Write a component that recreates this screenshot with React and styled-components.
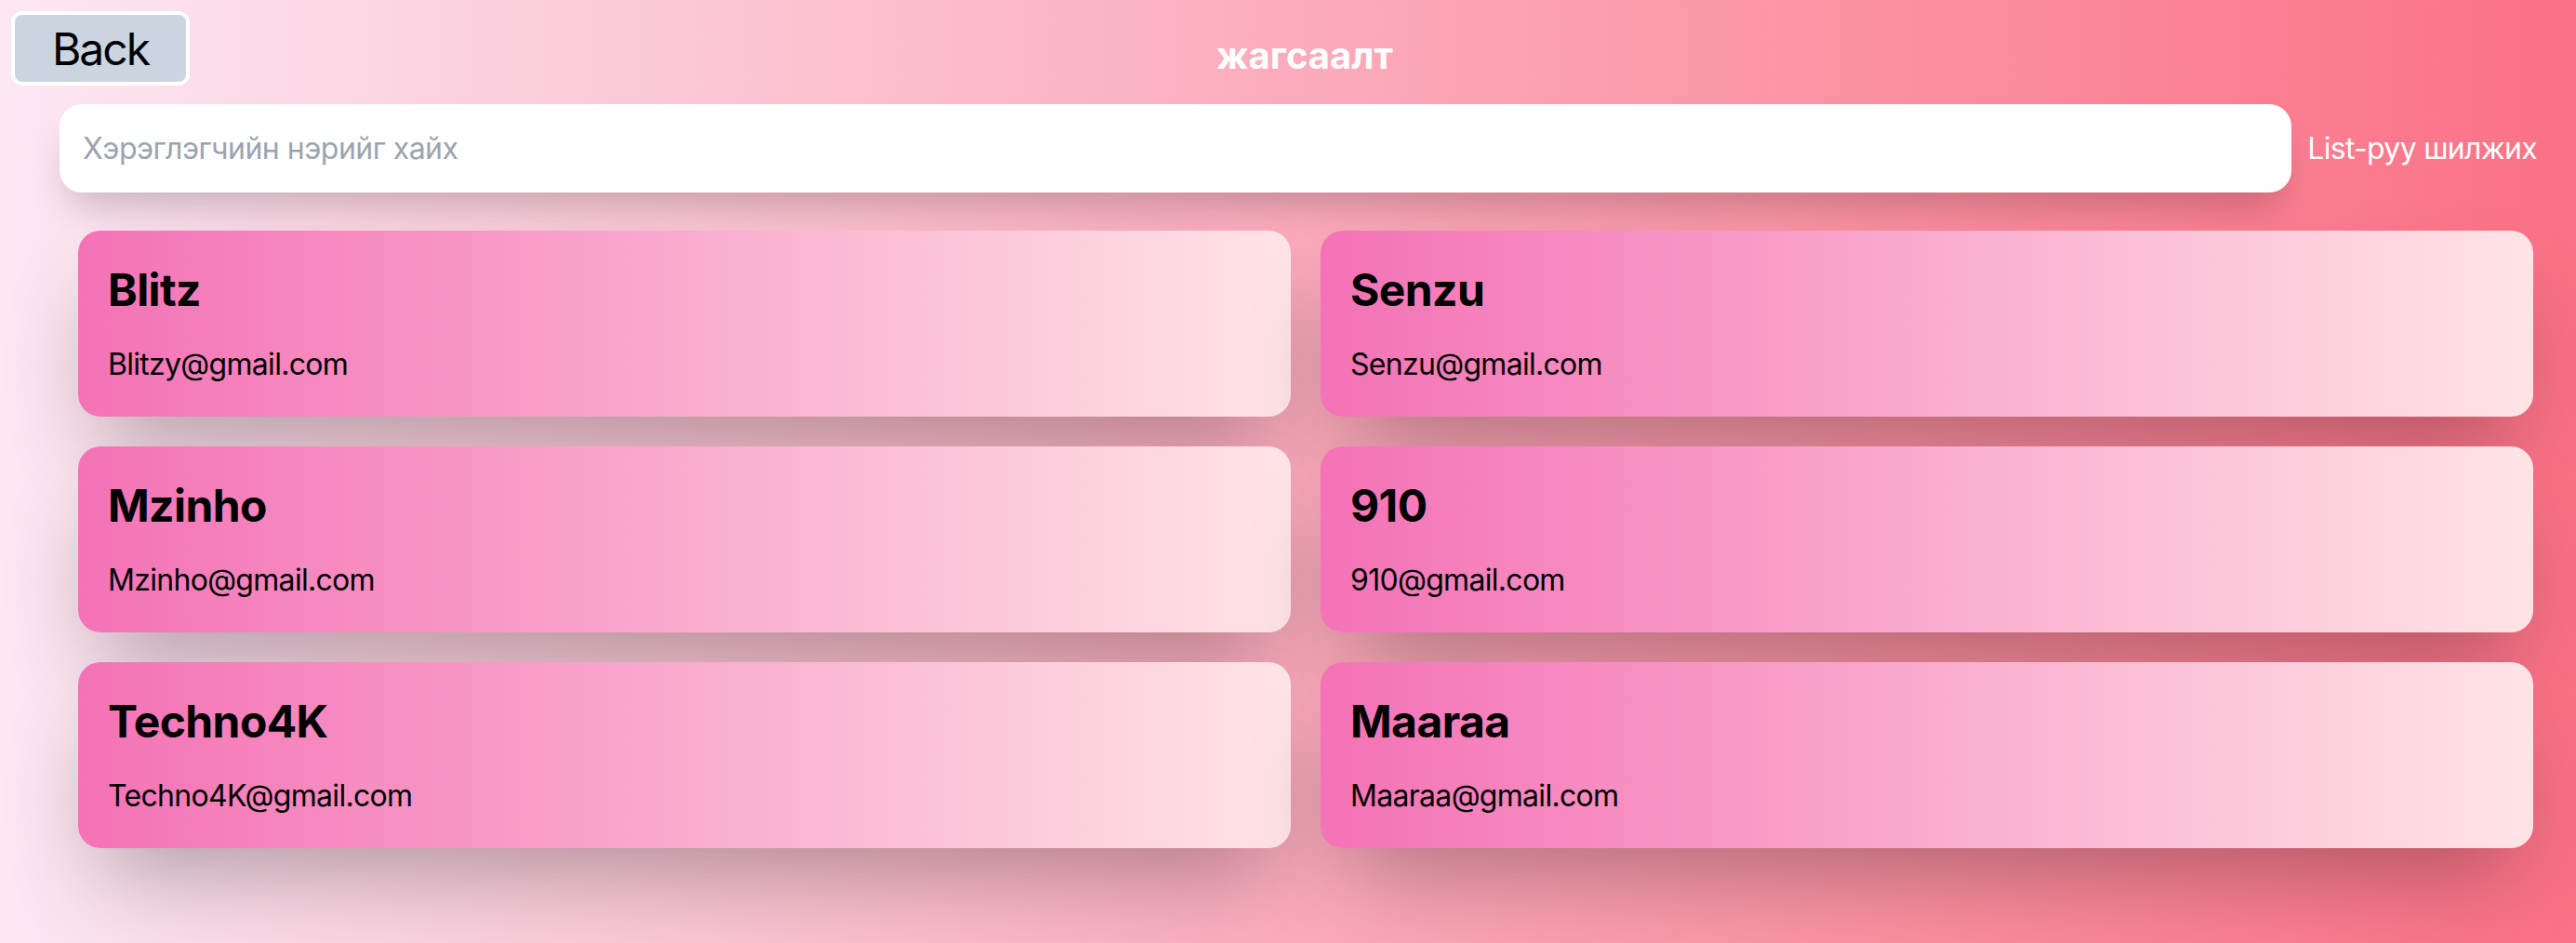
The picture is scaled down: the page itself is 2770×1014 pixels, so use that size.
import styled, { createGlobalStyle } from 'styled-components';

const GlobalStyle = createGlobalStyle`
  * {
    box-sizing: border-box;
  }
  body {
    margin: 0;
    font-family: Inter, 'Noto Sans', 'Liberation Sans', sans-serif;
  }
`;

const Page = styled.div`
  position: relative;
  min-height: 100vh;
  padding: 32px 28px 40px 64px;
  background: linear-gradient(to right, #fce7f3, #fb7185);
`;

const BackButton = styled.button`
  position: absolute;
  top: 12px;
  left: 12px;
  width: 192px;
  height: 80px;
  border: 4px solid #ffffff;
  border-radius: 12px;
  background-color: #cbd5e1;
  color: #000000;
  font-family: inherit;
  font-size: 48px;
  letter-spacing: -2px;
  cursor: pointer;
`;

const Title = styled.h1`
  margin: 0;
  text-align: center;
  color: #ffffff;
  font-size: 40px;
  font-weight: 700;
  line-height: 56px;
`;

const SearchRow = styled.div`
  display: flex;
  align-items: center;
  gap: 17px;
  margin-top: 24px;
`;

const SearchInput = styled.input`
  flex: 1;
  height: 95px;
  padding: 0 25px;
  border: none;
  border-radius: 24px;
  background: #ffffff;
  font-family: inherit;
  font-size: 32px;
  letter-spacing: -0.5px;
  color: #111827;
  outline: none;
  box-shadow: 0 24px 40px -12px rgba(0, 0, 0, 0.22);

  &::placeholder {
    color: #9ca3af;
  }
`;

const ListLink = styled.a`
  padding-right: 14px;
  color: #ffffff;
  font-size: 32px;
  letter-spacing: -0.7px;
  text-decoration: none;
  white-space: nowrap;
  cursor: pointer;
`;

const Grid = styled.div`
  display: grid;
  grid-template-columns: 1fr 1fr;
  gap: 32px;
  margin-top: 41px;
  padding: 0 18px 0 20px;
`;

const Card = styled.div`
  padding: 32px;
  border-radius: 24px;
  background: linear-gradient(to right, #f472b6, #ffe4e6);
  box-shadow: 0 50px 100px -24px rgba(0, 0, 0, 0.3);
`;

const Name = styled.h2`
  margin: 0;
  color: #000000;
  font-size: 48px;
  font-weight: 700;
  letter-spacing: -0.6px;
  line-height: 64px;
`;

const Email = styled.p`
  margin: 24px 0 0;
  color: #000000;
  font-size: 32px;
  letter-spacing: -0.7px;
  line-height: 48px;
`;

const users = [
  { name: 'Blitz', email: 'Blitzy@gmail.com' },
  { name: 'Senzu', email: 'Senzu@gmail.com' },
  { name: 'Mzinho', email: 'Mzinho@gmail.com' },
  { name: '910', email: '910@gmail.com' },
  { name: 'Techno4K', email: 'Techno4K@gmail.com' },
  { name: 'Maaraa', email: 'Maaraa@gmail.com' },
];

const App = () => {
  return (
    <Page>
      <GlobalStyle />
      <BackButton type="button">Back</BackButton>
      <Title>жагсаалт</Title>
      <SearchRow>
        <SearchInput type="text" placeholder="Хэрэглэгчийн нэрийг хайх" />
        <ListLink>List-руу шилжих</ListLink>
      </SearchRow>
      <Grid>
        {users.map((u) => (
          <Card key={u.name}>
            <Name>{u.name}</Name>
            <Email>{u.email}</Email>
          </Card>
        ))}
      </Grid>
    </Page>
  );
};

export default App;
